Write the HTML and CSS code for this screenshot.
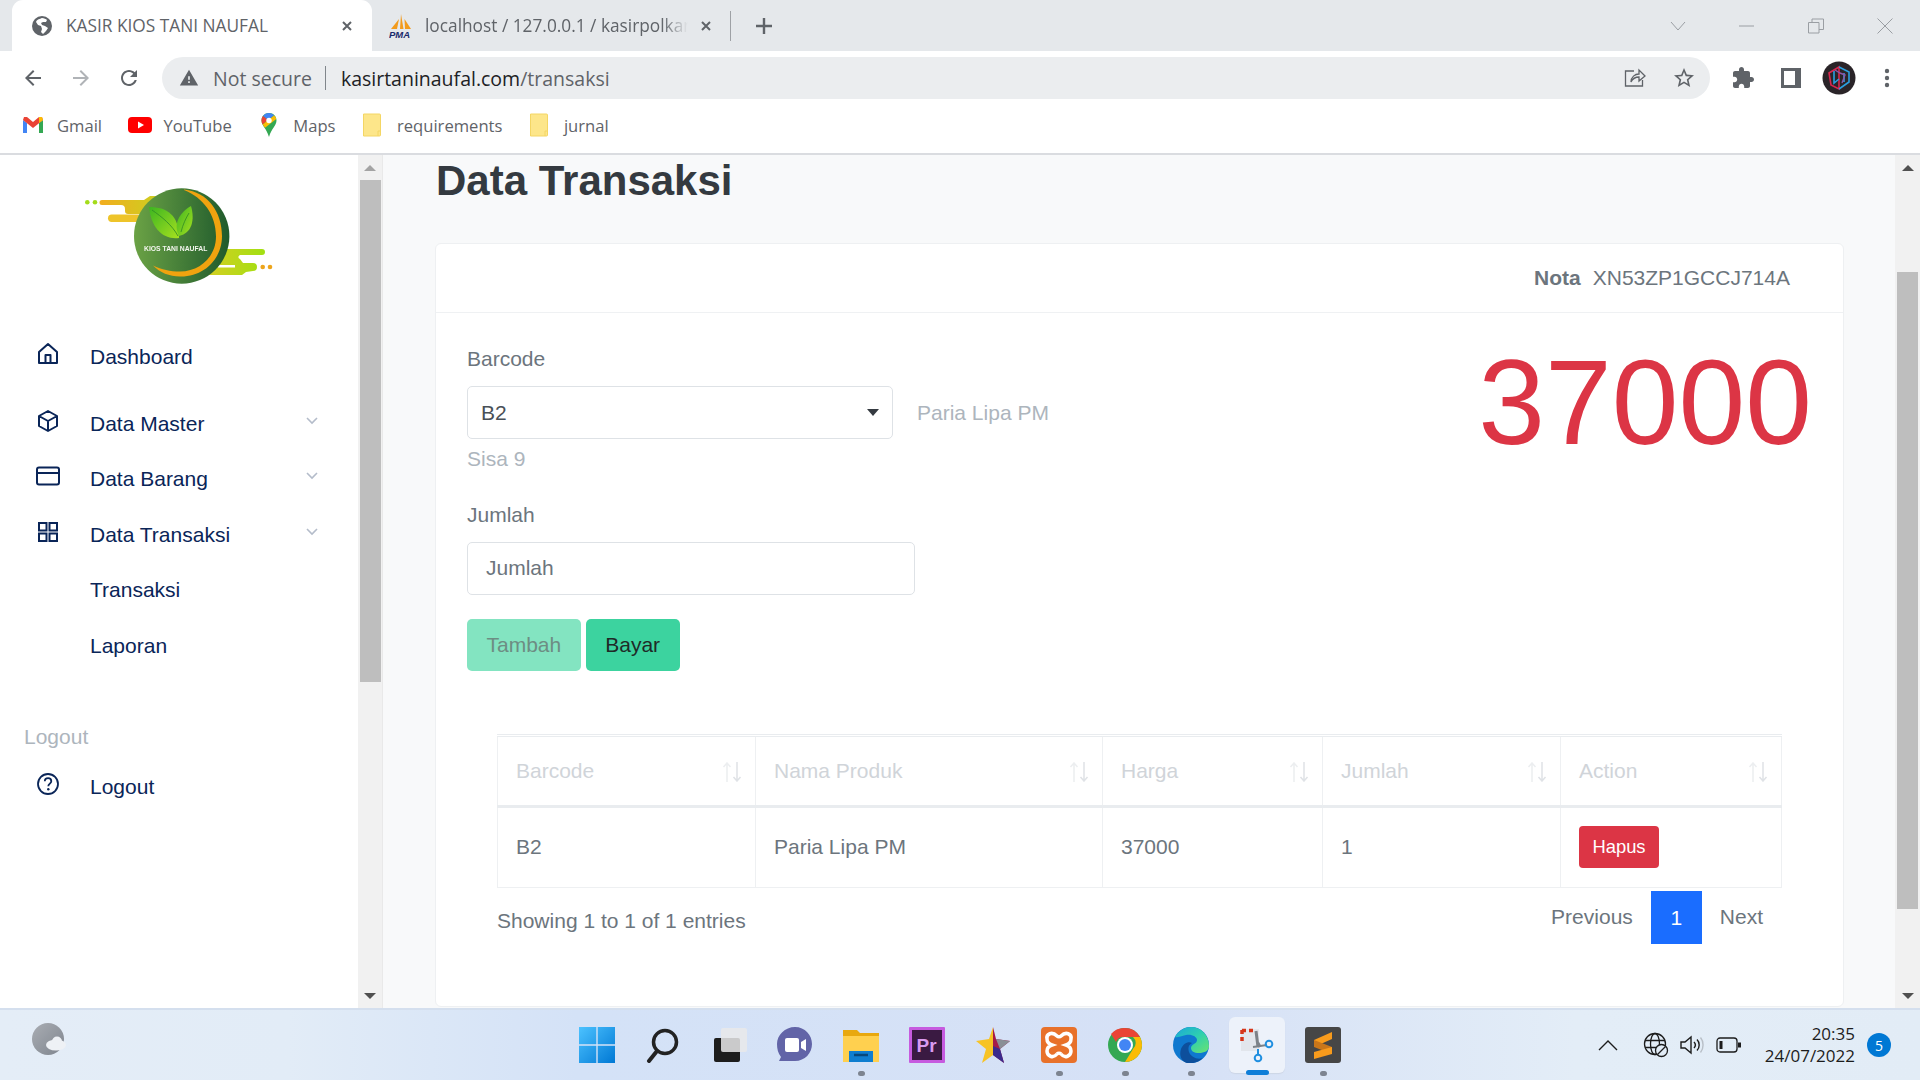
FILE: index.html
```html
<!DOCTYPE html>
<html lang="id">
<head>
<meta charset="utf-8">
<title>KASIR KIOS TANI NAUFAL</title>
<link rel="stylesheet" href="styles.css">
</head>
<body>
<div class="screen">
  <div class="tabbar">
    <div class="tab tab-active">
      <svg class="ic20" viewBox="0 0 20 20"><circle cx="10" cy="10" r="10" fill="#5f6368"/><path d="M10 2c-2 1-5 1-6 4l2 3 3 1 1 3-1 3 2 2 3-3 2-3-3-2-3-1-1-2 2-1 3 0 1-2c-1-1-3-2-5-2z" fill="#fff"/></svg>
      <span class="tab-title">KASIR KIOS TANI NAUFAL</span>
      <svg class="ic12" viewBox="0 0 12 12"><path d="M2 2l8 8M10 2l-8 8" stroke="#5f6368" stroke-width="2"/></svg>
    </div>
    <div class="tab tab-second">
      <svg class="ic24" viewBox="0 0 24 24"><path d="M12 0l2.500 15H11zM10 5L8 15H2zM15.500 5L22 15h-6z" fill="#f29b1d"/><text x="0" y="23.500" class="pma">PMA</text></svg>
      <span class="tab-title tab-fade">localhost / 127.0.0.1 / kasirpolkan</span>
      <svg class="ic12" viewBox="0 0 12 12"><path d="M2 2l8 8M10 2l-8 8" stroke="#5f6368" stroke-width="2"/></svg>
    </div>
    <div class="tab-divider"></div>
    <svg class="plus" viewBox="0 0 18 18"><path d="M9 1v16M1 9h16" stroke="#5f6368" stroke-width="2.400"/></svg>
    <div class="win-controls">
      <span class="win"><svg class="ic16" viewBox="0 0 16 16"><path d="M1 4l7 8 7-8" fill="none" stroke="#9a9ea3"/></svg></span>
      <span class="win"><svg class="ic16" viewBox="0 0 16 16"><path d="M0 8h15" stroke="#9a9ea3"/></svg></span>
      <span class="win"><svg class="ic16" viewBox="0 0 16 16"><path d="M.5 4.500h10.500v10.500H.5zM4 4V1h11.500v10.500H11" fill="none" stroke="#9a9ea3"/></svg></span>
      <span class="win"><svg class="ic16" viewBox="0 0 16 16"><path d="M.5.500l15 15M15.500.500l-15 15" stroke="#9a9ea3"/></svg></span>
    </div>
  </div>

  <div class="toolbar">
    <span class="tool"><svg class="ic24" viewBox="0 0 24 24"><path fill="#5f6368" d="M20 11H7.830l5.590-5.590L12 4l-8 8 8 8 1.410-1.410L7.830 13H20v-2z"/></svg></span>
    <span class="tool"><svg class="ic24" viewBox="0 0 24 24"><path fill="#b0b3b7" d="M12 4l-1.410 1.410L16.170 11H4v2h12.170l-5.580 5.590L12 20l8-8z"/></svg></span>
    <span class="tool"><svg class="ic24" viewBox="0 0 24 24"><path fill="#5f6368" d="M17.650 6.350C16.200 4.900 14.210 4 12 4c-4.420 0-7.990 3.580-7.990 8s3.570 8 7.990 8c3.730 0 6.840-2.550 7.730-6h-2.080c-.820 2.330-3.040 4-5.650 4-3.310 0-6-2.690-6-6s2.690-6 6-6c1.660 0 3.140.690 4.220 1.780L13 11h7V4l-2.350 2.350z"/></svg></span>
    <div class="address">
      <svg class="ic20" viewBox="0 0 24 24"><path fill="#5f6368" d="M1 21h22L12 2 1 21zm12-3h-2v-2h2v2zm0-4h-2v-4h2v4z"/></svg>
      <span class="not-secure">Not secure</span>
      <span class="addr-sep"></span>
      <span class="url">kasirtaninaufal.com<span class="url-path">/transaksi</span></span>
      <span class="addr-actions">
        <span class="addr-btn"><svg class="ic24" viewBox="0 0 24 24"><path d="M11 5H2.500v15h17v-6M8 16c0-5 4-8 8-8V4l6 6-6 5v-4c-3 0-6 1-8 5z" fill="none" stroke="#5f6368" stroke-width="1.300"/></svg></span>
        <span class="addr-btn"><svg class="ic24" viewBox="0 0 24 24"><path fill="#5f6368" d="M22 9.240l-7.190-.620L12 2 9.190 8.630 2 9.240l5.460 4.730L5.820 21 12 17.270 18.180 21l-1.630-7.030L22 9.240zM12 15.400l-3.760 2.270 1-4.280-3.320-2.880 4.380-.380L12 6.100l1.710 4.040 4.380.380-3.320 2.880 1 4.280L12 15.400z"/></svg></span>
      </span>
    </div>
    <span class="tool"><svg class="ic24" viewBox="0 0 24 24"><path fill="#5f6368" d="M20.500 11H19V7c0-1.100-.900-2-2-2h-4V3.500C13 2.120 11.880 1 10.500 1S8 2.120 8 3.500V5H4c-1.100 0-1.990.900-1.990 2v3.800H3.500c1.490 0 2.700 1.210 2.700 2.700s-1.210 2.700-2.700 2.700H2V20c0 1.100.900 2 2 2h3.800v-1.500c0-1.490 1.210-2.700 2.700-2.700 1.490 0 2.700 1.210 2.700 2.700V22H17c1.100 0 2-.900 2-2v-4h1.500c1.380 0 2.500-1.120 2.500-2.500S21.880 11 20.500 11z"/></svg></span>
    <span class="tool"><svg class="ic24" viewBox="0 0 24 24"><path fill="#5f6368" fill-rule="evenodd" d="M2 2h20v20H2zM5 5v14h11V5z"/></svg></span>
    <span class="tool"><svg class="ic34" viewBox="0 0 34 34"><circle cx="17" cy="17" r="16.500" fill="#2a2428"/><path d="M7 12l10-6v22L9 24z" fill="none" stroke="#d9264f" stroke-width="1.600"/><path d="M12 10v12l5-4M17 6l10 5v10l-10 7M22 12v9" fill="none" stroke="#2a9fe0" stroke-width="1.600"/><path d="M13 9l5 3 5 2-3 8" fill="none" stroke="#8a55a8" stroke-width="1.400"/></svg></span>
    <span class="tool"><svg class="ic24" viewBox="0 0 24 24"><circle cx="12" cy="5" r="2.200" fill="#5f6368"/><circle cx="12" cy="12" r="2.200" fill="#5f6368"/><circle cx="12" cy="19" r="2.200" fill="#5f6368"/></svg></span>
  </div>

  <div class="bookmarks">
    <span class="bm"><svg class="ic24" viewBox="0 0 24 24"><path d="M2 7v13h4V10z" fill="#4285f4"/><path d="M22 7v13h-4V10z" fill="#34a853"/><path d="M2 7l10 8 10-8-1-3-3 0-6 5-6-5H3z" fill="#ea4335"/><path d="M18 4h3l1 3-4 3z" fill="#fbbc04"/></svg>Gmail</span>
    <span class="bm"><svg class="ic24" viewBox="0 0 24 24"><rect y="4" width="24" height="16" rx="4" fill="#f00"/><path d="M10 8.500v7l6-3.500z" fill="#fff"/></svg>YouTube</span>
    <span class="bm"><svg class="ic24" viewBox="0 0 24 24"><path d="M12 0C7.500 0 4.500 3.500 4.500 7.500c0 5 5 8 7.500 16.500 2.500-8.500 7.500-11.500 7.500-16.500C19.500 3.500 16.500 0 12 0z" fill="#34a853"/><path d="M12 0C9.500 0 7.500 1 6 3l5 4 6-4.500C15.800 1 14 0 12 0z" fill="#4285f4"/><path d="M6 3C5 4.200 4.500 5.800 4.500 7.500c0 1.500.500 2.900 1.200 4.100L11 7z" fill="#ea4335"/><path d="M17 2.500L5.700 11.600l2.300 3.200L19.300 6c-.300-1.300-1.200-2.600-2.300-3.500z" fill="#fbbc04"/><circle cx="12" cy="7.500" r="2.700" fill="#fff"/></svg>Maps</span>
    <span class="bm"><svg class="ic24" viewBox="0 0 24 24"><path d="M2.500 1h16a1 1 0 0 1 1 1v20a1 1 0 0 1-1 1h-16z" fill="#fde68a" stroke="#f4d664"/><path d="M17 23v-5h2.500" fill="none" stroke="#f4d664"/></svg>requirements</span>
    <span class="bm"><svg class="ic24" viewBox="0 0 24 24"><path d="M2.500 1h16a1 1 0 0 1 1 1v20a1 1 0 0 1-1 1h-16z" fill="#fde68a" stroke="#f4d664"/><path d="M17 23v-5h2.500" fill="none" stroke="#f4d664"/></svg>jurnal</span>
  </div>

  <div class="viewport">
    <aside class="sidebar">
      <div class="logo-box">
        <svg class="logo" viewBox="0 0 200 110">
          <defs>
            <linearGradient id="lg" x1="0" x2="1" y1="0" y2="0"><stop offset="0" stop-color="#6ba245"/><stop offset="1" stop-color="#1f5a2c"/></linearGradient>
            <linearGradient id="lf" x1="0" x2="1" y1="0" y2="1"><stop offset="0" stop-color="#3cb521"/><stop offset="1" stop-color="#a6e01f"/></linearGradient>
            <linearGradient id="lt" x1="0" x2="1" y1="0" y2="0"><stop offset="0" stop-color="#f2ad1f"/><stop offset="1" stop-color="#c9d21f"/></linearGradient>
            <linearGradient id="lr" x1="0" x2="1" y1="0" y2="0"><stop offset="0" stop-color="#d4cf22"/><stop offset="1" stop-color="#a2e012"/></linearGradient>
          </defs>
          <path d="M24 22h42l6-4h14v18H50a3 3 0 0 1-3-3v-2a4 4 0 0 0-4-4H24a2.500 2.500 0 0 1 0-5z" fill="url(#lt)"/>
          <rect x="30" y="36.500" width="50" height="7.500" rx="3.700" fill="#eec42a"/>
          <circle cx="9.300" cy="24.300" r="2.300" fill="#a4dc1a"/><circle cx="17" cy="24.300" r="2.300" fill="#a4dc1a"/>
          <path d="M130 71h54a3 3 0 0 1 0 6h-21a2 2 0 0 0-1 4l3 4h10a4 4 0 0 1 0 8l-7 1-4 3h-34z" fill="url(#lr)"/>
          <rect x="140" y="87" width="17" height="2.500" fill="#fff"/>
          <circle cx="184.700" cy="89" r="2.300" fill="#eda51c"/><circle cx="192" cy="89" r="2.300" fill="#eda51c"/>
          <circle cx="103.700" cy="58" r="47.700" fill="url(#lg)"/>
          <path d="M106 11.500C130 14 144 34 144 58c0 24-19 41-42 40.500-11 0-20-4-27-11 9 4 17 6 27 6 20 0 36-15 36-35 0-22-13-39-32-46.500z" fill="#f0a30f"/>
          <path d="M71 29c18 0 30 8 30 31-16 2-28-10-30-31z" fill="url(#lf)"/>
          <path d="M101 58c-6-12 0-23 12-30 4 14 1 27-12 30z" fill="url(#lf)"/>
          <path d="M74 32c10 7 20 15 26 26M103 54c2-8 5-14 8-19" stroke="#2f8a25" stroke-width=".8" fill="none"/>
          <text x="66" y="73" class="logo-text">KIOS TANI NAUFAL</text>
        </svg>
      </div>
      <nav class="nav">
        <a class="nav-item nav-first"><svg class="nav-ic" viewBox="0 0 24 24"><path d="M3 21V10l9-8 9 8v11H3zM9.500 21v-8h5v8" fill="none" stroke="#0a2558" stroke-width="2" stroke-linejoin="round"/></svg><span class="nav-text">Dashboard</span></a>
        <a class="nav-item"><svg class="nav-ic" viewBox="0 0 24 24"><path d="M12 2l9 5v10l-9 5-9-5V7zM3 7l9 5 9-5M12 12v10" fill="none" stroke="#0a2558" stroke-width="2" stroke-linejoin="round"/></svg><span class="nav-text">Data Master</span><svg class="nav-chev" viewBox="0 0 12 8"><path d="M1 1l5 5 5-5" fill="none" stroke="#b4bcca" stroke-width="1.600"/></svg></a>
        <a class="nav-item"><svg class="nav-ic" viewBox="0 0 24 24"><rect x="1" y="3.500" width="22" height="17" rx="2" fill="none" stroke="#0a2558" stroke-width="2"/><path d="M1 9h22" stroke="#0a2558" stroke-width="2"/></svg><span class="nav-text">Data Barang</span><svg class="nav-chev" viewBox="0 0 12 8"><path d="M1 1l5 5 5-5" fill="none" stroke="#b4bcca" stroke-width="1.600"/></svg></a>
        <a class="nav-item"><svg class="nav-ic" viewBox="0 0 24 24"><path d="M3 3h7.500v7.500H3zM13.500 3H21v7.500h-7.500zM3 13.500h7.500V21H3zM13.500 13.500H21V21h-7.500z" fill="none" stroke="#0a2558" stroke-width="2"/></svg><span class="nav-text">Data Transaksi</span><svg class="nav-chev" viewBox="0 0 12 8"><path d="M1 1l5 5 5-5" fill="none" stroke="#b4bcca" stroke-width="1.600"/></svg></a>
        <a class="nav-item nav-sub"><span class="nav-text">Transaksi</span></a>
        <a class="nav-item nav-sub"><span class="nav-text">Laporan</span></a>
      </nav>
      <div class="nav-heading">Logout</div>
      <a class="nav-item"><svg class="nav-ic" viewBox="0 0 24 24"><circle cx="12" cy="12" r="10" fill="none" stroke="#0a2558" stroke-width="1.800"/><path d="M8.800 9.300c0-4.200 6.500-4.200 6.500 0 0 2.400-3 2.300-3 5" fill="none" stroke="#0a2558" stroke-width="1.800"/><circle cx="12.300" cy="17.300" r="1.200" fill="#0a2558"/></svg><span class="nav-text">Logout</span></a>
    </aside>
    <div class="scrollbar scrollbar-side">
      <span class="sb-arrow"><i class="tri-up tri-light"></i></span>
      <span class="sb-thumb sb-thumb-side"></span>
      <span class="sb-fill"></span>
      <span class="sb-arrow"><i class="tri-down"></i></span>
    </div>
    <main class="content">
      <h1 class="page-title">Data Transaksi</h1>
      <section class="card">
        <header class="card-head"><b>Nota</b><span>XN53ZP1GCCJ714A</span></header>
        <div class="card-body">
          <div class="form-row">
            <div class="form-col">
              <div class="label">Barcode</div>
              <div class="select-row">
                <div class="select"><span>B2</span><i class="tri-down tri-select"></i></div>
                <span class="muted">Paria Lipa PM</span>
              </div>
              <div class="muted sisa">Sisa 9</div>
              <div class="label label-jumlah">Jumlah</div>
              <input class="input" placeholder="Jumlah">
              <div class="btn-row">
                <button class="btn btn-disabled">Tambah</button>
                <button class="btn btn-success">Bayar</button>
              </div>
            </div>
            <div class="total">37000</div>
          </div>
          <div class="table-wrap">
            <table class="table">
              <colgroup><col class="c1"><col class="c2"><col class="c3"><col class="c4"><col class="c5"></colgroup>
              <thead>
                <tr>
                  <th><div class="th-in">Barcode<svg class="sort" viewBox="0 0 20 20"><path d="M5 20V1M1.500 5L5 1l3.500 4" fill="none" stroke="#eceef0" stroke-width="1.500"/><path d="M15 0v19M11.500 15l3.500 4 3.500-4" fill="none" stroke="#dfe2e6" stroke-width="1.500"/></svg></div></th>
                  <th><div class="th-in">Nama Produk<svg class="sort" viewBox="0 0 20 20"><path d="M5 20V1M1.500 5L5 1l3.500 4" fill="none" stroke="#eceef0" stroke-width="1.500"/><path d="M15 0v19M11.500 15l3.500 4 3.500-4" fill="none" stroke="#dfe2e6" stroke-width="1.500"/></svg></div></th>
                  <th><div class="th-in">Harga<svg class="sort" viewBox="0 0 20 20"><path d="M5 20V1M1.500 5L5 1l3.500 4" fill="none" stroke="#eceef0" stroke-width="1.500"/><path d="M15 0v19M11.500 15l3.500 4 3.500-4" fill="none" stroke="#dfe2e6" stroke-width="1.500"/></svg></div></th>
                  <th><div class="th-in">Jumlah<svg class="sort" viewBox="0 0 20 20"><path d="M5 20V1M1.500 5L5 1l3.500 4" fill="none" stroke="#eceef0" stroke-width="1.500"/><path d="M15 0v19M11.500 15l3.500 4 3.500-4" fill="none" stroke="#dfe2e6" stroke-width="1.500"/></svg></div></th>
                  <th><div class="th-in">Action<svg class="sort" viewBox="0 0 20 20"><path d="M5 20V1M1.500 5L5 1l3.500 4" fill="none" stroke="#eceef0" stroke-width="1.500"/><path d="M15 0v19M11.500 15l3.500 4 3.500-4" fill="none" stroke="#dfe2e6" stroke-width="1.500"/></svg></div></th>
                </tr>
              </thead>
              <tbody>
                <tr><td>B2</td><td>Paria Lipa PM</td><td>37000</td><td>1</td><td><button class="btn-hapus">Hapus</button></td></tr>
              </tbody>
            </table>
            <div class="table-foot">
              <div class="info">Showing 1 to 1 of 1 entries</div>
              <div class="pager"><span class="page">Previous</span><span class="page page-on">1</span><span class="page">Next</span></div>
            </div>
          </div>
        </div>
      </section>
    </main>
    <div class="scrollbar">
      <span class="sb-arrow"><i class="tri-up"></i></span>
      <span class="sb-thumb sb-thumb-page"></span>
      <span class="sb-fill"></span>
      <span class="sb-arrow"><i class="tri-down"></i></span>
    </div>
  </div>

  <footer class="taskbar">
    <svg class="weather" viewBox="0 0 34 32"><defs><linearGradient id="wg" x1="0" x2="1" y1="0" y2="1"><stop offset="0" stop-color="#a9adb3"/><stop offset="1" stop-color="#7f858e"/></linearGradient></defs><circle cx="16" cy="16" r="16" fill="url(#wg)"/><ellipse cx="24" cy="22" rx="10" ry="5.500" fill="#eef1f5"/><circle cx="25" cy="18.500" r="5" fill="#eef1f5"/></svg>
    <div class="apps">
      <span class="app"><svg class="ic36" viewBox="0 0 36 36"><defs><linearGradient id="wa" x1="0" x2="1" y1="0" y2="1"><stop offset="0" stop-color="#4cc2ff"/><stop offset="1" stop-color="#0078d4"/></linearGradient></defs><path d="M0 0h17.300v17.300H0zM18.700 0H36v17.300H18.700zM0 18.700h17.300V36H0zM18.700 18.700H36V36H18.700z" fill="url(#wa)"/></svg></span>
      <span class="app"><svg class="ic36" viewBox="0 0 36 36"><circle cx="20" cy="15" r="11.500" fill="none" stroke="#222" stroke-width="3.500"/><path d="M12 24l-8 10" stroke="#222" stroke-width="4" stroke-linecap="round"/></svg></span>
      <span class="app"><svg class="ic36" viewBox="0 0 36 36"><rect x="3" y="11" width="26" height="24" rx="2" fill="#1d1d1d"/><rect x="10" y="1" width="26" height="24" rx="2" fill="#e9e9ea" opacity=".85"/></svg></span>
      <span class="app"><svg class="ic36" viewBox="0 0 36 36"><path d="M18 0c10 0 17 8 17 17s-7 17-17 17H2l2-4C1 26 0 22 0 17 0 8 8 0 18 0z" fill="#6264a7"/><rect x="8" y="11" width="14" height="14" rx="2" fill="#fff"/><path d="M24 15l5-3v12l-5-3z" fill="#fff"/></svg></span>
      <span class="app"><svg class="ic36" viewBox="0 0 36 36"><path d="M0 3h14l3 3h19v29H0z" fill="#e8a80f"/><path d="M0 9h36v26H0z" fill="#ffd04f"/><path d="M6 24h24v11H6z" fill="#0f7ed0"/><path d="M11 28h14" stroke="#07487c" stroke-width="2.500"/></svg><i class="app-dot"></i></span>
      <span class="app"><svg class="ic36" viewBox="0 0 36 36"><rect width="36" height="36" rx="1" fill="#c65bdf"/><rect x="3" y="3" width="30" height="30" fill="#3a1a42"/><text x="7.500" y="25" class="pr">Pr</text></svg></span>
      <span class="app"><svg class="ic36" viewBox="0 0 36 36"><path d="M18 0l3 12 14 2-10 8 4 14-11-8z" fill="#a51a4a"/><path d="M18 0l-4 12-13 2 10 8-4 14 11-8z" fill="#f7c325"/><path d="M18 28l11 8-4-14-7-3z" fill="#3b2a8c"/><path d="M25 22l10-8-14-2z" fill="#8a8f96"/></svg></span>
      <span class="app"><svg class="ic36" viewBox="0 0 36 36"><rect width="36" height="36" rx="4" fill="#e8712a"/><path d="M16 9c-5-5-11-2-10 3 0 3 2 5 5 6-3 1-5 3-5 6 0 5 6 8 10 3M20 9c5-5 11-2 10 3 0 3-2 5-5 6 3 1 5 3 5 6 0 5-6 8-10 3M16 9c1 1 3 1 4 0M16 27c1-1 3-1 4 0" fill="none" stroke="#fff" stroke-width="3.500"/></svg><i class="app-dot"></i></span>
      <span class="app"><svg class="ic36" viewBox="0 0 36 36"><circle cx="18" cy="18" r="17" fill="#34a853"/><path d="M18 1a17 17 0 0 1 15 9H17a8 8 0 0 0-8 5L4 7a17 17 0 0 1 14-6z" fill="#ea4335"/><path d="M33 10a17 17 0 0 1-15 25l8-13a8 8 0 0 0 0-12z" fill="#fbbc04"/><circle cx="18" cy="18" r="8" fill="#fff"/><circle cx="18" cy="18" r="6" fill="#4285f4"/></svg><i class="app-dot"></i></span>
      <span class="app"><svg class="ic36" viewBox="0 0 36 36"><defs><linearGradient id="eg" x1="0" x2="1" y1="0" y2="1"><stop offset="0" stop-color="#1aa7d9"/><stop offset=".5" stop-color="#2ecfb0"/><stop offset="1" stop-color="#6be36f"/></linearGradient></defs><circle cx="18" cy="18" r="18" fill="#0f78cf"/><path d="M2 10C6 3 12 0 18 0c10 0 18 8 18 19 0 5-5 7-10 7-5 0-8-2-8-5 0-4 6-4 6-8 0-3-5-6-11-5-5 1-9 3-11 2z" fill="url(#eg)"/><path d="M14 36C8 34 6 28 8 22c2-5 7-8 11-6-4 2-4 6-3 9 2 5 8 8 14 6-4 4-10 6-16 5z" fill="#0d4f9c"/></svg><i class="app-dot"></i></span>
      <span class="app app-active"><svg class="ic36" viewBox="0 0 36 36"><path d="M2 2h18v22H2z" fill="#e2e6ec"/><path d="M3 3.500h4M10 3.500h4M3 3v4M3 10v4" stroke="#d6361a" stroke-width="3.500" fill="none"/><path d="M17 4l2 16M21 20l-2-4" stroke="#7c8288" stroke-width="3"/><path d="M14 20l14-2" stroke="#7c8288" stroke-width="2"/><circle cx="30" cy="17" r="3.300" fill="none" stroke="#1f8fe0" stroke-width="2"/><circle cx="19" cy="31" r="3.300" fill="none" stroke="#1f8fe0" stroke-width="2"/><path d="M19 28v-6" stroke="#1f8fe0" stroke-width="2"/></svg><i class="app-bar"></i></span>
      <span class="app"><svg class="ic36" viewBox="0 0 36 36"><rect width="36" height="36" rx="3" fill="#464646"/><path d="M27 5v7L9 20v-7z" fill="#f89b1c"/><path d="M9 13l18 7v7L9 20z" fill="#c9761a"/><path d="M27 20v7L9 32v-7z" fill="#f89b1c"/></svg><i class="app-dot"></i></span>
    </div>
    <div class="tray">
      <svg class="tray-ic tray-chev" viewBox="0 0 20 12"><path d="M1 11l9-9 9 9" fill="none" stroke="#1c1c1c" stroke-width="1.400"/></svg>
      <svg class="tray-ic" viewBox="0 0 26 26"><circle cx="12" cy="12" r="10.500" fill="none" stroke="#1c1c1c" stroke-width="1.300"/><ellipse cx="12" cy="12" rx="4.500" ry="10.500" fill="none" stroke="#1c1c1c" stroke-width="1.300"/><path d="M2 8.500h20M2 15.500h20" stroke="#1c1c1c" stroke-width="1.300"/><circle cx="18.500" cy="18.500" r="6" fill="#e2ecf6" stroke="#1c1c1c" stroke-width="1.300"/><path d="M14.500 22.500l8-8" stroke="#1c1c1c" stroke-width="1.300"/></svg>
      <svg class="tray-ic" viewBox="0 0 26 26"><path d="M2 10v6h4l6 5V5l-6 5z" fill="none" stroke="#1c1c1c" stroke-width="1.400"/><path d="M15 10c1.600 1.700 1.600 4.300 0 6M18 7.500c2.900 3 2.900 8 0 11" fill="none" stroke="#1c1c1c" stroke-width="1.400"/><path d="M21.500 5.500c3.400 4 3.400 11 0 15" fill="none" stroke="#b8bfc7" stroke-width="1.400"/></svg>
      <svg class="tray-ic tray-batt" viewBox="0 0 26 18"><rect x="1" y="2" width="20" height="14" rx="3" fill="none" stroke="#1c1c1c" stroke-width="1.300"/><rect x="3.500" y="5" width="3" height="8" fill="#1c1c1c"/><rect x="22" y="6.500" width="3" height="5" fill="#1c1c1c"/></svg>
      <div class="clock"><span>20:35</span><span>24/07/2022</span></div>
      <span class="badge">5</span>
    </div>
  </footer>
</div>
</body>
</html>
```

FILE: styles.css
```css
* { box-sizing: border-box; }
html, body { margin: 0; height: 100%; overflow: hidden; }
body { font-family: "Liberation Sans", Arial, sans-serif; color: #6c757d; background: #fff; }
.screen { display: flex; flex-direction: column; width: 1920px; height: 1080px; }
svg { display: block; flex: none; }
.ic12 { width: 12px; height: 12px; }
.ic16 { width: 16px; height: 16px; }
.ic20 { width: 20px; height: 20px; }
.ic24 { width: 24px; height: 24px; }
.ic34 { width: 34px; height: 34px; }
.ic36 { width: 36px; height: 36px; }

/* browser chrome */
.tabbar { display: flex; align-items: center; height: 51px; background: #e5e8eb; font-family: "Open Sans", "Noto Sans", sans-serif; }
.tab { display: flex; align-items: center; height: 51px; font-size: 17.300px; color: #5f6368; }
.tab-active { width: 360px; margin-left: 12px; padding: 0 19px 0 20px; background: #fff; border-radius: 11px 11px 0 0; gap: 14px; }
.tab-second { width: 358px; padding: 0 18px 0 17px; gap: 12px; }
.tab-title { flex: 1; white-space: nowrap; overflow: hidden; }
.tab-fade { -webkit-mask-image: linear-gradient(90deg, #000 90%, transparent); mask-image: linear-gradient(90deg, #000 90%, transparent); }
.pma { font: italic bold 9.500px "Liberation Sans", sans-serif; fill: #1b2a6b; }
.tab-divider { width: 1px; height: 30px; background: #9ea1a5; }
.plus { width: 18px; height: 18px; margin-left: 24px; }
.win-controls { display: flex; margin-left: auto; margin-right: 1px; }
.win { display: flex; align-items: center; justify-content: center; width: 69px; height: 51px; }

.toolbar { display: flex; align-items: center; height: 48px; padding: 0 9px; background: #fff; }
.tool { display: flex; align-items: center; justify-content: center; width: 48px; height: 48px; }
.address { display: flex; align-items: center; flex: 1; height: 42px; margin: 6px 9px 0; padding: 0 2px 0 17px; background: #ebedef; border-radius: 21px; font-family: "Open Sans", "Noto Sans", sans-serif; font-size: 19.500px; }
.toolbar > .tool { margin-top: 6px; }
.not-secure { margin-left: 14px; color: #5f6368; }
.addr-sep { width: 1px; height: 24px; margin: 0 15px 0 13px; background: #80868b; }
.url { color: #202124; }
.url-path { color: #5f6368; }
.addr-actions { display: flex; margin-left: auto; }
.addr-btn { display: flex; align-items: center; justify-content: center; width: 49px; height: 42px; }

.bookmarks { display: flex; align-items: center; gap: 25.500px; height: 56px; padding: 0 0 2px 21px; background: #fff; border-bottom: 2px solid #dadce0; font-family: "Open Sans", "Noto Sans", sans-serif; font-size: 16.600px; color: #5f6368; }
.bm { display: flex; align-items: center; gap: 12px; }

/* page */
.viewport { display: flex; flex: 1; min-height: 0; background: #f8f9fa; }
.sidebar { display: flex; flex-direction: column; width: 358px; background: #fff; }
.logo-box { height: 174px; padding: 23px 0 0 78px; }
.logo { width: 200px; height: 110px; filter: blur(.4px); }
.logo-text { font: bold 6.800px "Liberation Sans", sans-serif; fill: #f3f6ee; }
.nav { display: flex; flex-direction: column; }
.nav-item { display: flex; align-items: center; height: 55.400px; padding-left: 36px; color: #0a2558; font-size: 21px; }
.nav-first { margin-bottom: 12px; }
.nav-sub { padding-left: 90px; }
.nav-ic { width: 24px; height: 24px; margin-bottom: 6px; }
.nav-text { margin-left: 30px; }
.nav-sub .nav-text { margin-left: 0; }
.nav-chev { width: 12px; height: 8px; margin: 0 40px 6px auto; }
.nav-heading { margin: 52px 0 10px 24px; font-size: 21px; line-height: 24px; color: #adb5bd; }

.scrollbar { display: flex; flex-direction: column; align-items: center; width: 25px; background: #f1f1f1; }
.scrollbar-side { border-right: 1px solid #e9e9e9; }
.sb-arrow { display: flex; align-items: center; justify-content: center; width: 100%; height: 25px; flex: none; }
.sb-fill { flex: 1; }
.sb-thumb { width: 21px; background: #bebebe; flex: none; }
.sb-thumb-side { height: 502px; margin-left: 1px; }
.sb-thumb-page { height: 637px; margin-top: 92px; }
.tri-up, .tri-down { display: block; width: 0; height: 0; border-left: 6px solid transparent; border-right: 6px solid transparent; }
.tri-up { border-bottom: 6px solid #505050; }
.tri-light { border-bottom-color: #a3a3a3; }
.tri-down { border-top: 6px solid #505050; }

.content { display: flex; flex-direction: column; flex: 1; min-width: 0; padding: 2px 51px 1px 52px; }
.page-title { margin: 0 0 38px 1px; font-size: 42px; line-height: 48px; font-weight: 700; color: #343a40; }
.card { flex: 1; min-height: 0; background: #fff; border: 1px solid #eef0f2; border-radius: 6px; }
.card-head { display: flex; justify-content: flex-end; align-items: center; gap: 12px; height: 69px; padding-right: 53px; font-size: 21px; border-bottom: 1px solid #eff1f3; }
.card-body { padding: 0 31px; }
.form-row { display: flex; justify-content: space-between; align-items: flex-start; }
.form-col { padding-top: 34px; }
.label { font-size: 21px; line-height: 24px; margin-bottom: 15px; }
.label-jumlah { margin-top: 32px; }
.select-row { display: flex; align-items: center; gap: 24px; }
.select { display: flex; align-items: center; justify-content: space-between; width: 426px; height: 52.500px; padding: 1px 13px 0; border: 1px solid #dee2e6; border-radius: 5px; font-size: 21px; color: #495057; }
.select-row .muted { margin-top: 1px; }
.tri-select { border-top-color: #343a40; border-top-width: 7px; }
.muted { font-size: 21px; line-height: 24px; color: #adb5bd; }
.sisa { margin-top: 8.500px; }
.input { display: block; width: 448px; height: 52.500px; padding: 0 18px; border: 1px solid #dee2e6; border-radius: 5px; font: 21px "Liberation Sans", sans-serif; outline: none; }
.input::placeholder { color: #6c757d; opacity: 1; }
.btn-row { display: flex; gap: 5px; margin-top: 24.500px; }
.btn { height: 52px; padding: 0 19.500px; border: 0; border-radius: 5px; font: 21px "Liberation Sans", sans-serif; }
.btn-disabled { background: #83e4c1; color: #6d8d83; }
.btn-success { background: #3cd39f; color: #1f2a27; }
.total { margin-top: 17px; font-size: 120px; line-height: 144px; color: #dc3545; }
.table-wrap { width: 1284px; margin: 63px 0 0 30px; }
.table { width: 100%; table-layout: fixed; border-collapse: collapse; border-top: 3px double #e9ecef; font-size: 21px; }
.c1 { width: 258px; } .c2 { width: 347px; } .c3 { width: 220px; } .c4 { width: 238px; } .c5 { width: 221px; }
th { height: 71px; padding: 0 13px 0 18px; border: 1px solid #eef0f2; border-bottom: 3px solid #e9ecef; font-weight: 400; color: #d0d4d9; text-align: left; }
.th-in { display: flex; align-items: center; justify-content: space-between; }
.sort { width: 20px; height: 20px; margin-top: 2px; }
td { height: 81px; padding: 0 18px 2px; border: 1px solid #eef0f2; }
.btn-hapus { display: block; width: 80px; height: 42px; padding: 0; border: 0; border-radius: 4px; background: #dc3545; color: #fff; font: 18.400px "Liberation Sans", sans-serif; }
.table-foot { display: flex; justify-content: space-between; align-items: flex-start; margin-top: 3px; font-size: 21px; }
.info { padding-top: 18px; line-height: 24px; }
.pager { display: flex; }
.page { display: flex; align-items: center; height: 53px; padding: 0 18px 2px; }
.page-on { justify-content: center; width: 51px; padding: 0; background: #1a6dff; color: #fff; }

/* taskbar */
.taskbar { display: flex; align-items: center; height: 72px; padding-left: 32px; background: linear-gradient(90deg, #e4edf7 0, #e2ecf7 15%, #d4e2f7 30%, #d6e1f6 62%, #e3edf7 82%, #e2ecf6 100%); border-top: 2px solid #d4dfee; font-family: "Open Sans", "Noto Sans", sans-serif; }
.weather { width: 34px; height: 32px; margin-bottom: 12px; }
.apps { display: flex; margin-left: 498px; }
.app { position: relative; display: flex; align-items: center; justify-content: center; width: 66px; height: 70px; }
.pr { font: bold 19px "Liberation Sans", sans-serif; fill: #d99bf0; }
.app-active::before { content: ""; position: absolute; left: 5px; top: 7px; width: 56px; height: 56px; border-radius: 6px; background: #edf2fa; box-shadow: 0 1px 1px #cdd6e6; }
.app-active svg { position: relative; }
.app-dot { position: absolute; left: 30px; bottom: 4px; width: 7px; height: 5px; border-radius: 3px; background: #7d8490; }
.app-bar { position: absolute; left: 22px; bottom: 5px; width: 23px; height: 5px; border-radius: 3px; background: #0f7ed8; }
.tray { display: flex; align-items: center; margin-left: auto; padding-right: 29px; color: #1c1c1c; }
.tray-ic { width: 26px; height: 26px; margin-left: 10px; }
.tray-chev { width: 20px; height: 12px; margin-right: 15px; }
.tray-batt { height: 18px; margin-left: 11px; }
.clock { display: flex; flex-direction: column; align-items: flex-end; margin-left: 23px; font-size: 17px; line-height: 22px; }
.badge { display: flex; align-items: center; justify-content: center; width: 24px; height: 24px; margin-left: 12px; border-radius: 50%; background: #0078d4; color: #fff; font-size: 14px; }
```
